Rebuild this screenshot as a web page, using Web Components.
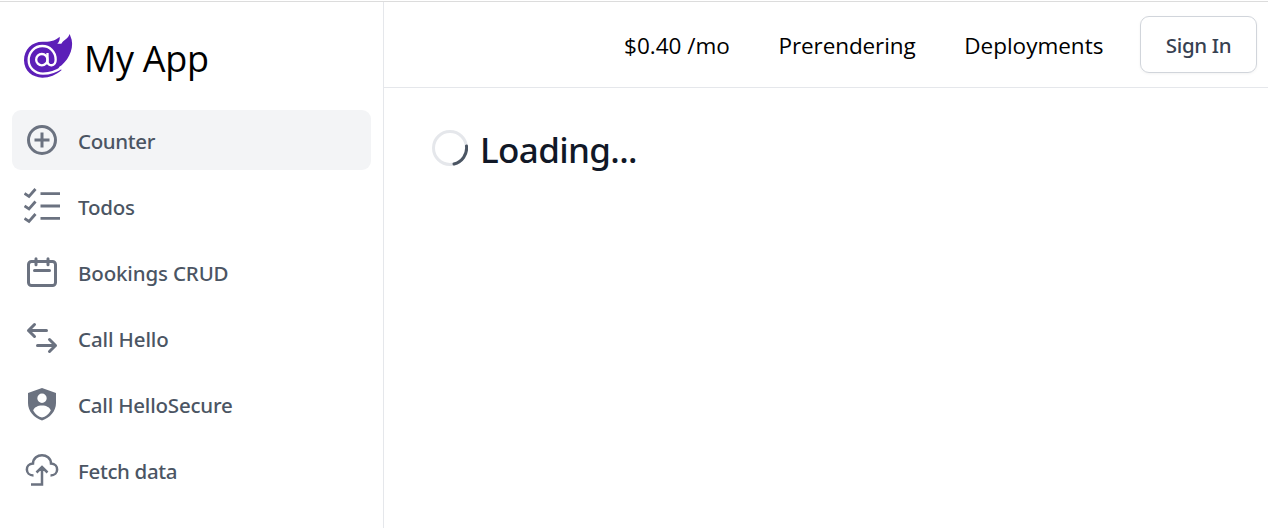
<!DOCTYPE html>
<html lang="en"><head><meta charset="utf-8"><title>My App</title>
<style>
html,body{margin:0;height:100%;overflow:hidden;background:#fff}
body{font-family:"Noto Sans","Open Sans",sans-serif;color:#000}
</style></head><body>
<app-shell>
  <app-brand slot="side">My App</app-brand>
  <nav-item slot="side" icon="plus" active style="--ls:-.35px">Counter</nav-item>
  <nav-item slot="side" icon="checks" style="--ls:-.2px">Todos</nav-item>
  <nav-item slot="side" icon="calendar" style="--ls:-.15px">Bookings CRUD</nav-item>
  <nav-item slot="side" icon="arrows" style="--ls:-.12px">Call Hello</nav-item>
  <nav-item slot="side" icon="shield" style="--ls:-.2px">Call HelloSecure</nav-item>
  <nav-item slot="side" icon="cloud" style="--ls:-.35px">Fetch data</nav-item>
  <top-bar slot="top"><top-link>$0.40 /mo</top-link><top-link style="letter-spacing:-.1px">Prerendering</top-link><top-link>Deployments</top-link><sign-button>Sign In</sign-button></top-bar>
  <loading-title>Loading...</loading-title>
</app-shell>
<script>
const define = (name, html) => customElements.define(name, class extends HTMLElement {
  constructor(){ super(); this.attachShadow({mode:'open'}).innerHTML = html; }
});
define('app-shell', `<style>
:host{display:flex;height:528px;box-sizing:border-box;border-top:1px solid #fff;box-shadow:inset 0 1px #dcdcdc}
aside{width:371px;padding:0 0 0 12px;border-right:1px solid #e5e7eb;margin-top:1px;display:flex;flex-direction:column;gap:6px;flex:none}
section{flex:1;min-width:0;margin-top:1px}
</style><aside><slot name="side"></slot></aside><section><slot name="top"></slot><slot></slot></section>`);
define('app-brand', `<style>
:host{display:flex;height:102px;align-items:flex-start;font-family:"Open Sans","Noto Sans",sans-serif;font-size:36px;line-height:48px;font-weight:400}
svg{margin:26px 0 0 4px;flex:none}span{margin:33px 0 0 4px;white-space:nowrap;letter-spacing:-.3px}
</style><svg width="64" height="56" viewBox="48 84 192 168"><path fill="#5c1fb8" d="M209 102C205 116 190 120 184 131Q179 132 172 131C178 125 180 118 179 110C164 124 146 125 128 125C95 125 72 149 72 181C72 213 98 233 127 233C149 233 168 225 185 210L176 202C201 186 222 151 215 119Z"/><g fill="none" stroke="#fff" stroke-width="7"><circle cx="125.500" cy="179" r="17"/><path d="M142.500 159V184C142.500 201 167 200 167 179C167 155 149 138 127 138C104 138 86 157 86 180C86 203 104 221 129 221C151 221 171 213 188 201"/></g></svg><span><slot></slot></span>`);
const icons = {
plus:'<g stroke-width="3"><circle cx="18" cy="18" r="13.5"/><path d="M18 10.5v15M10.5 18h15"/></g>',
checks:'<g stroke-width="2.800"><path d="M16.500 5.700H36M16.500 18H36M16.500 30.300H36"/><path d="M.5 5.500L5 8.500L11.500 1M.5 18L5 21L11.500 13.500M.5 30.500L5 33.500L11.500 26"/></g>',
calendar:'<g stroke-width="3" stroke-linecap="round"><rect x="4.500" y="7.500" width="27" height="24" rx="3"/><path d="M12 4.700v6M24 4.700v6M10.500 16.500h15"/></g>',
arrows:'<g stroke-width="3" stroke-linecap="round" stroke-linejoin="round"><path d="M10.500 4.500L4.500 10.500L10.500 16.500M4.500 10.500h18M25.500 19.500L31.500 25.500L25.500 31.500M31.500 25.500h-18"/></g>',
shield:'<path fill="#6b7280" stroke="none" fill-rule="evenodd" d="M18 2L32 7V17C32 25 26 32 18 34.500C10 32 4 25 4 17V7ZM18 7.500a4.700 4.700 0 1 0 0 9.400a4.700 4.700 0 0 0 0-9.400ZM18 19.500C13.500 19.500 10 21.500 9.200 24.500C11.500 28.500 14.500 30.800 18 31.500C21.500 30.800 24.500 28.500 26.800 24.500C26 21.500 22.500 19.500 18 19.500Z"/>',
cloud:'<g stroke-width="2.500"><path d="M9.500 23.500C1 23.500 .5 12 9 11.500C9.500 .5 26.500 .5 27 11.500C35.500 12 35 23.500 26.500 23.500M18 15.500V32.500H7M12.500 20.500L18 15L23.500 20.500"/></g>'};
customElements.define('nav-item', class extends HTMLElement{
 connectedCallback(){ this.attachShadow({mode:'open'}).innerHTML=`<style>
:host{display:flex;align-items:center;width:359px;height:60px;box-sizing:border-box;padding-left:12px;gap:18px;border-radius:9px;font-size:20.5px;font-weight:500;color:#4b5563}
:host([active]){background:#f3f4f6}
svg{flex:none}span{white-space:nowrap;line-height:30px;padding-top:2px;letter-spacing:var(--ls,0)}
</style><svg width="36" height="36" viewBox="0 0 36 36" fill="none" stroke="#6b7280">${icons[this.getAttribute('icon')]}</svg><span><slot></slot></span>`;}
});
define('top-bar', `<style>:host{display:flex;justify-content:flex-end;align-items:center;height:85px;border-bottom:1px solid #e5e7eb;padding-right:11px}</style><slot></slot>`);
define('top-link', `<style>:host{display:block;font-family:"Open Sans","Noto Sans",sans-serif;font-size:22.5px;font-weight:370;line-height:36px;padding-top:2px;margin-right:48.6px;white-space:nowrap}</style><slot></slot>`);
define('sign-button', `<style>:host{display:flex;align-items:center;justify-content:center;width:115px;height:55px;border:1px solid #d1d5db;border-radius:9px;box-shadow:0 1px 3px #0000000d;font-size:20.5px;font-weight:500;color:#374151;margin-left:-12px;letter-spacing:-.35px}</style><slot></slot>`);
define('loading-title', `<style>:host{display:flex;padding:42px 0 0 48px;color:#111827;font-size:35px;line-height:40px;font-weight:500;letter-spacing:-.65px}svg{flex:none;margin-right:12px}</style><svg width="36" height="36" viewBox="0 0 36 36" fill="none"><circle cx="18" cy="18" r="16.500" stroke="#e5e7eb" stroke-width="3"/><path d="M34.500 16A16.500 16.500 0 0 1 22 34" stroke="#4b5563" stroke-width="3" stroke-linecap="round"/></svg><slot></slot>`);
</script></body></html>
